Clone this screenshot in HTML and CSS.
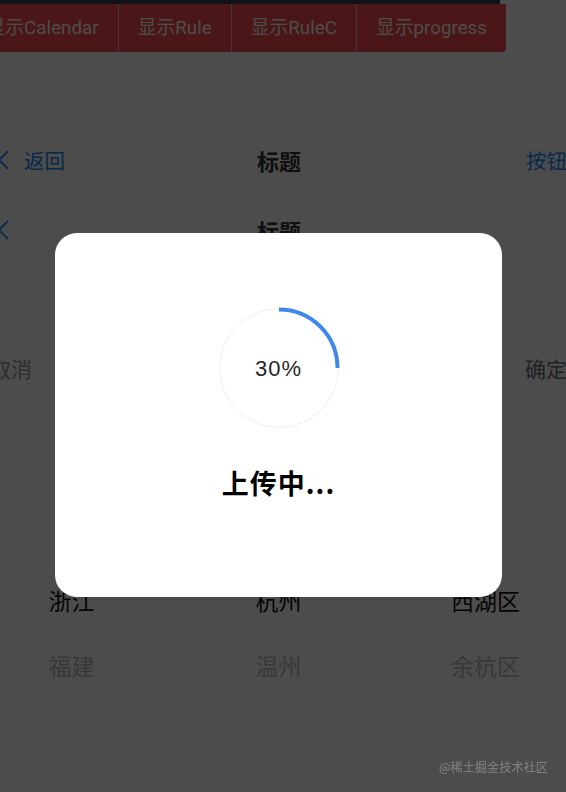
FILE: index.html
```html
<!DOCTYPE html>
<html lang="zh-CN">
<head>
<meta charset="utf-8">
<title>Progress Toast</title>
<link rel="stylesheet" href="styles.css">
</head>
<body>
<div class="page">
  <div class="strip"></div>
  <div class="btn-row">
    <button class="btn btn-first">显示Calendar</button>
    <button class="btn">显示Rule</button>
    <button class="btn">显示RuleC</button>
    <button class="btn">显示progress</button>
  </div>

  <div class="nav nav-first">
    <div class="nav-left">
      <svg class="arrow" width="20" height="20" viewBox="0 0 20 20"><polyline points="17,1 8,10 17,19" fill="none" stroke="currentColor" stroke-width="1.8"/></svg>
      <span class="nav-text">返回</span>
    </div>
    <div class="nav-title">标题</div>
    <div class="nav-right nav-text">按钮</div>
  </div>
  <div class="nav">
    <div class="nav-left">
      <svg class="arrow" width="20" height="20" viewBox="0 0 20 20"><polyline points="17,1 8,10 17,19" fill="none" stroke="currentColor" stroke-width="1.8"/></svg>
    </div>
    <div class="nav-title">标题</div>
    <div class="nav-right"></div>
  </div>

  <div class="toolbar">
    <span class="cancel">取消</span>
    <span class="confirm">确定</span>
  </div>

  <div class="picker">
    <div class="col">
      <div class="item selected">浙江</div>
      <div class="item faded">福建</div>
    </div>
    <div class="col">
      <div class="item selected">杭州</div>
      <div class="item faded">温州</div>
    </div>
    <div class="col">
      <div class="item selected">西湖区</div>
      <div class="item faded">余杭区</div>
    </div>
  </div>
</div>

<div class="mask"></div>

<div class="dialog-layer">
  <div class="dialog">
    <div class="circle">
      <svg width="122" height="122" viewBox="0 0 122 122">
        <circle cx="61" cy="61" r="59.5" fill="none" stroke="#eef0f3" stroke-width="1"/>
        <path d="M61 2.5 A58.5 58.5 0 0 1 119.5 61" fill="none" stroke="#4087ec" stroke-width="4"/>
      </svg>
      <span class="percent">30%</span>
    </div>
    <div class="status">上传中...</div>
  </div>
</div>

<div class="watermark">@稀土掘金技术社区</div>
</body>
</html>
```

FILE: styles.css
```css
* { box-sizing: border-box; }

html, body {
  margin: 0;
  padding: 0;
  width: 566px;
  height: 792px;
  overflow: hidden;
  background: #ffffff;
  font-family: Roboto, "Noto Sans CJK SC", sans-serif;
}

.page {
  width: 621px;
  margin-left: -32px;
}

.strip {
  margin-left: 6px;
  width: 526px;
  height: 4px;
  background: #3c3f62;
}

.btn-row {
  margin-left: 6px;
  width: 532px;
  height: 48px;
  display: flex;
  justify-content: flex-end;
  background: #f84a50;
  border-radius: 0 0 4px 0;
  overflow: hidden;
}

.btn {
  flex: none;
  height: 48px;
  padding: 0 19px;
  border: 0;
  border-left: 1px solid #f6b0b3;
  background: transparent;
  color: #ffffff;
  font-family: Roboto, "Noto Sans CJK SC", sans-serif;
  font-size: 18.8px;
  line-height: 48px;
  white-space: nowrap;
}

.btn-first { border-left: 0; }

.nav {
  height: 68px;
  padding: 0 22px 0 23px;
  display: grid;
  grid-template-columns: 1fr auto 1fr;
  align-items: center;
}

.nav-first { margin-top: 74px; margin-bottom: 2px; }

.nav-left {
  display: flex;
  align-items: center;
  gap: 13px;
  color: #1989fa;
}

.arrow { display: block; }

.nav-text {
  font-size: 20.5px;
  color: #1989fa;
}

.nav-title {
  font-size: 22px;
  font-weight: 700;
  color: #323233;
}

.nav-right { text-align: right; }

.toolbar {
  margin-top: 72px;
  height: 64px;
  padding: 0 22px;
  display: flex;
  justify-content: space-between;
  align-items: center;
  font-size: 21px;
}

.cancel { color: #969799; }
.confirm { color: #6f7278; }

.picker {
  margin-top: 170px;
  display: grid;
  grid-template-columns: repeat(3, 1fr);
}

.item {
  height: 65px;
  line-height: 65px;
  text-align: center;
  font-size: 23px;
}

.selected { color: #111111; }
.faded { color: #bcbcbc; }

.mask {
  position: fixed;
  inset: 0;
  background: rgba(0, 0, 0, 0.7);
  z-index: 1;
}

.dialog-layer {
  position: fixed;
  inset: 0;
  z-index: 2;
  padding: 233px 0 0 55px;
}

.dialog {
  width: 447px;
  height: 364px;
  background: #ffffff;
  border-radius: 22px;
  display: flex;
  flex-direction: column;
  align-items: center;
  padding-top: 74px;
}

.circle {
  position: relative;
  width: 122px;
  height: 122px;
}

.circle svg { display: block; }

.percent {
  position: absolute;
  inset: 0;
  display: flex;
  align-items: center;
  justify-content: center;
  padding-top: 2px;
  font-family: "Liberation Sans", Arial, sans-serif;
  font-size: 22px;
  letter-spacing: 1px;
  color: #262626;
}

.status {
  margin-top: 36px;
  font-family: "Noto Sans CJK SC", sans-serif;
  font-size: 27px;
  line-height: 36px;
  font-weight: 700;
  letter-spacing: 1px;
  color: #000000;
}

.watermark {
  position: fixed;
  right: 18px;
  bottom: 17px;
  z-index: 3;
  font-family: "Noto Sans CJK SC", sans-serif;
  font-size: 12.2px;
  line-height: 16px;
  color: rgba(255, 255, 255, 0.3);
}
```
